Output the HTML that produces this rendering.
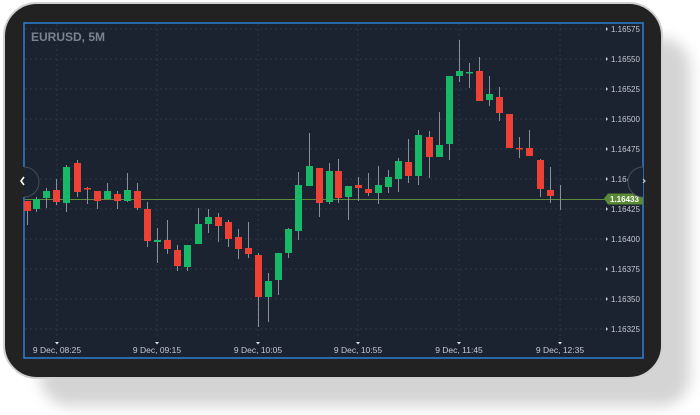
<!DOCTYPE html>
<html><head><meta charset="utf-8"><style>
html,body{margin:0;padding:0;background:#fff;width:700px;height:415px;overflow:hidden;font-family:"Liberation Sans",sans-serif}
.shadow{position:absolute;left:40px;top:38px;width:650px;height:368px;border-radius:30px;background:#d4d4d4;filter:blur(7px)}
.bezel{position:absolute;left:3px;top:2px;width:660px;height:377px;border-radius:34px;background:#222;border:2px solid #d0d0d0;box-sizing:border-box}
svg{position:absolute;left:0;top:0}
</style></head><body>
<div class="shadow"></div>
<div class="bezel"></div>
<svg width="700" height="415" viewBox="0 0 700 415" font-family="Liberation Sans, sans-serif">
<rect x="24" y="23" width="619" height="335" fill="#1b2230" stroke="#2d7fd4" stroke-width="1.5"/>
<g stroke="#2e3848" stroke-width="1" stroke-dasharray="2,3">
<line x1="25" x2="606" y1="29" y2="29"/><line x1="25" x2="606" y1="59" y2="59"/><line x1="25" x2="606" y1="89" y2="89"/><line x1="25" x2="606" y1="119" y2="119"/><line x1="25" x2="606" y1="149" y2="149"/><line x1="25" x2="606" y1="179" y2="179"/><line x1="25" x2="606" y1="209" y2="209"/><line x1="25" x2="606" y1="239" y2="239"/><line x1="25" x2="606" y1="269" y2="269"/><line x1="25" x2="606" y1="299" y2="299"/><line x1="25" x2="606" y1="329" y2="329"/>
<line x1="57" x2="57" y1="24" y2="340"/><line x1="157" x2="157" y1="24" y2="340"/><line x1="258" x2="258" y1="24" y2="340"/><line x1="358" x2="358" y1="24" y2="340"/><line x1="459" x2="459" y1="24" y2="340"/><line x1="560" x2="560" y1="24" y2="340"/>
</g>
<line x1="25" x2="608" y1="199.5" y2="199.5" stroke="#5e8a3a" stroke-width="1"/>
<g id="c" stroke="#8a8f98" stroke-width="1"></g>
<text x="31" y="41" fill="#7a838f" font-size="12" font-weight="bold">EURUSD, 5M</text>
<g fill="#c5cad2" font-size="8">
<text x="611" y="32">1.16575</text><text x="611" y="62">1.16550</text><text x="611" y="92">1.16525</text><text x="611" y="122">1.16500</text><text x="611" y="152">1.16475</text><text x="611" y="182">1.164</text><text x="611" y="212">1.16425</text><text x="611" y="242">1.16400</text><text x="611" y="272">1.16375</text><text x="611" y="302">1.16350</text><text x="611" y="332">1.16325</text>
</g>
<g fill="#c5cad2"><path d="M606 27l2 2-2 2z M606 57l2 2-2 2z M606 87l2 2-2 2z M606 117l2 2-2 2z M606 147l2 2-2 2z M606 177l2 2-2 2z M606 207l2 2-2 2z M606 237l2 2-2 2z M606 267l2 2-2 2z M606 297l2 2-2 2z M606 327l2 2-2 2z"/></g>
<path d="M604 198.5l4-5h35v11h-35z" fill="#5b8a35"/>
<text x="610" y="202" fill="#fff" font-size="8" font-weight="bold">1.16433</text>
<g fill="#c5cad2" font-size="8.5" text-anchor="middle">
<text x="57" y="353">9 Dec, 08:25</text><text x="157" y="353">9 Dec, 09:15</text><text x="258" y="353">9 Dec, 10:05</text><text x="358" y="353">9 Dec, 10:55</text><text x="459" y="353">9 Dec, 11:45</text><text x="560" y="353">9 Dec, 12:35</text>
</g>
<g fill="#e0e0e0"><path d="M55 342h4l-2 2.5z M155 342h4l-2 2.5z M256 342h4l-2 2.5z M356 342h4l-2 2.5z M457 342h4l-2 2.5z M558 342h4l-2 2.5z"/></g>
<path d="M24 167a15 15 0 0 1 0 30" fill="#1b2230" stroke="#444c58" stroke-width="1"/>
<path d="M24 167a15 15 0 0 0 0 30" fill="#222"/>
<path d="M24 177l-3 4 3 4" stroke="#fff" stroke-width="1.6" fill="none"/>
<path d="M643 167a15 15 0 0 0 0 30" fill="#1b2230" stroke="#444c58" stroke-width="1"/>
<path d="M643 179l2 2-2 2" stroke="#ccc" stroke-width="1.2" fill="none"/>
</svg>
<script>
var d=[[27,201,211,201,225,0],[36,199,209,197,212,1],[46,191,198,188,208,1],[56,190,202,179,205,0],[66,167,203,165,212,1],[77,163,192,160,197,0],[87,188,189.5,187,204,0],[97,191,201,191,209,0],[107,191,199,183,199,1],[117,194,201,191,209,0],[127,190,201,173,202,1],[137,191,208,183,210,0],[147,209,241,202,247,0],[157,240,242,228,263,1],[167,240,249,220,254,0],[177,250,266,245,271,0],[187,245,267,245,271,1],[198,224,244,208,244,1],[208,217,224,209,233,1],[218,217,226,213,242,0],[228,222,239,220,247,0],[238,237,249,229,259,0],[248,248,254,222,258,0],[258,255,297,253,327,0],[268,281,297,273,322,1],[278,253,280,253,295,1],[288,229,253,228,258,1],[298,185,231,172,240,1],[309,166,186,133,186,1],[319,168,203,168,217,0],[329,171,202,163,204,1],[338,171,198,159,203,0],[348,186,197,186,220,1],[358,185,188,177,201,0],[368,189,193,173,196,0],[378,185,193,166,204,1],[388,177,187,170,193,1],[398,161,179,158,192,1],[408,162,176,139,183,0],[418,135,176,130,185,1],[429,137,157,131,178,0],[439,145,157,112,157,1],[449,76,144,76,160,1],[459,71,76,40,82,1],[469,72,73.5,63,88,1],[479,71,101,57,101,0],[489,94,100,76,106,1],[499,97,113,87,121,0],[509,114,148,114,148,0],[519,148,149.5,137,158,0],[529,148,156,130,156,0],[540,160,189,159,197,0],[550,190,196,167,203,0]];
var s='';d.forEach(function(c){s+='<line x1="'+(c[0]+.5)+'" x2="'+(c[0]+.5)+'" y1="'+c[3]+'" y2="'+c[4]+'"/><rect x="'+(c[0]-3)+'" y="'+c[1]+'" width="7" height="'+Math.max(1.5,c[2]-c[1])+'" fill="'+(c[5]?'#17b868':'#ee4136')+'" stroke="none"/>';});
s+='<line x1="560.5" x2="560.5" y1="185" y2="210"/>';
document.getElementById('c').innerHTML=s;
</script>
</body></html>
